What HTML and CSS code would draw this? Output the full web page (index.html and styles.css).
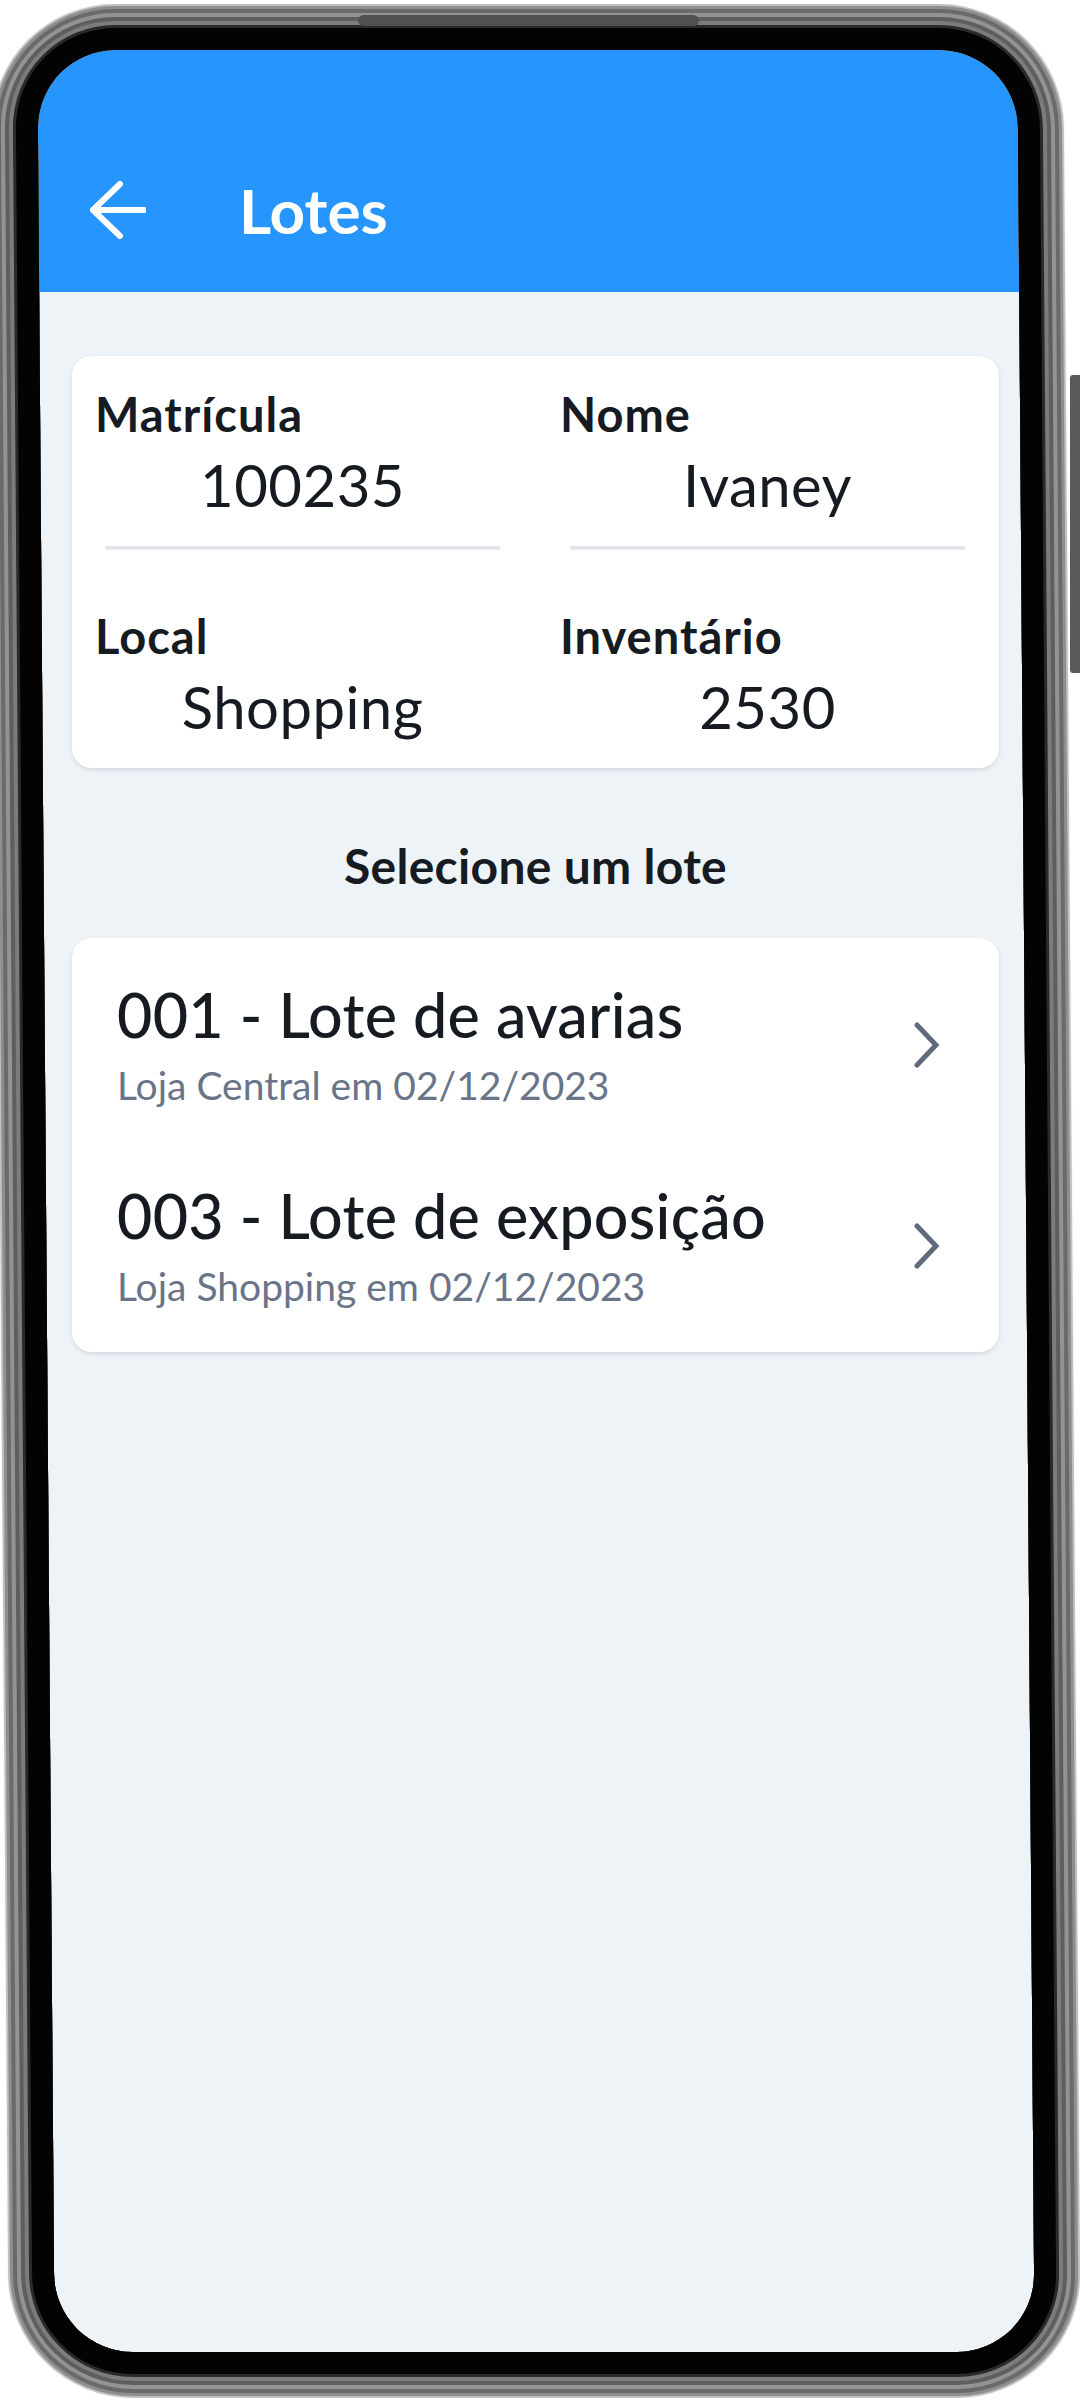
FILE: index.html
```html
<!DOCTYPE html>
<html lang="pt">
<head>
<meta charset="utf-8">
<title>Lotes</title>
<link rel="stylesheet" href="styles.css">
</head>
<body>
<div class="device">
  <div class="screen">
    <header class="appbar">
      <div class="appbar-row">
        <svg class="back" width="56" height="58" viewBox="0 0 56 58" aria-hidden="true">
          <path d="M30 3 L3 29 L30 55 M3 29 L54 29" fill="none" stroke="#fff" stroke-width="6" stroke-linecap="round" stroke-linejoin="round"/>
        </svg>
        <h1 class="title">Lotes</h1>
      </div>
    </header>
    <main class="content">
      <section class="card info">
        <div class="field">
          <div class="label">Matrícula</div>
          <div class="value">100235</div>
          <div class="line"></div>
        </div>
        <div class="field">
          <div class="label">Nome</div>
          <div class="value">Ivaney</div>
          <div class="line"></div>
        </div>
        <div class="field">
          <div class="label">Local</div>
          <div class="value">Shopping</div>
          <div class="line"></div>
        </div>
        <div class="field">
          <div class="label">Inventário</div>
          <div class="value">2530</div>
          <div class="line"></div>
        </div>
      </section>
      <h2 class="section-title">Selecione um lote</h2>
      <section class="card list">
        <div class="item">
          <div class="item-text">
            <div class="item-title">001 - Lote de avarias</div>
            <div class="item-sub">Loja Central em 02/12/2023</div>
          </div>
          <svg class="chev" width="26" height="46" viewBox="0 0 26 46" aria-hidden="true">
            <path d="M3 3 L22 23 L3 43" fill="none" stroke="#5f6b7d" stroke-width="5" stroke-linecap="round" stroke-linejoin="miter"/>
          </svg>
        </div>
        <div class="item">
          <div class="item-text">
            <div class="item-title">003 - Lote de exposição</div>
            <div class="item-sub">Loja Shopping em 02/12/2023</div>
          </div>
          <svg class="chev" width="26" height="46" viewBox="0 0 26 46" aria-hidden="true">
            <path d="M3 3 L22 23 L3 43" fill="none" stroke="#5f6b7d" stroke-width="5" stroke-linecap="round" stroke-linejoin="miter"/>
          </svg>
        </div>
      </section>
    </main>
  </div>
  <div class="bezel"></div>
  <div class="speaker"></div>
  <div class="side-button"></div>
</div>
</body>
</html>
```
FILE: styles.css
```css
* { box-sizing: border-box; }
html, body {
  margin: 0;
  padding: 0;
  background: #fff;
}
body {
  font-family: Lato, "Noto Sans", "Liberation Sans", sans-serif;
  color: #161a21;
}
.device {
  position: relative;
  width: 1080px;
  height: 2400px;
  overflow: hidden;
  background: #fff;
}
.screen {
  margin: 40px 0 0 30px;
  width: 1020px;
  height: 2330px;
  background: #eef3f8;
}
.appbar {
  height: 252px;
  background: #2795fe;
  padding: 120px 0 32px 60px;
}
.appbar-row {
  display: flex;
  align-items: center;
  height: 100px;
}
.back {
  display: block;
  flex: none;
}
.title {
  margin: 0 0 0 93px;
  font-size: 62px;
  line-height: 100px;
  font-weight: 700;
  color: #fff;
}
.content {
  padding: 64px 0 0 42px;
}
.card {
  width: 927px;
  background: #fff;
  border-radius: 20px;
  box-shadow: 0 2px 4px rgba(30, 40, 60, 0.13);
}
.info {
  display: grid;
  grid-template-columns: 465px 1fr;
  row-gap: 59px;
  padding: 30px 24px 0 23px;
  height: 412px;
  overflow: hidden;
}
.field {
  display: flex;
  flex-direction: column;
}
.label {
  font-size: 47px;
  line-height: 56px;
  font-weight: 700;
  letter-spacing: 1px;
}
.value {
  margin: 8px 0 0 10px;
  width: 395px;
  text-align: center;
  font-size: 58px;
  line-height: 70px;
  font-weight: 400;
  letter-spacing: 0.5px;
}
.line {
  margin: 26px 0 0 10px;
  width: 395px;
  height: 3px;
  border-radius: 2px;
  background: #e0e4e9;
  box-shadow: 0 1px 1px rgba(0, 0, 0, 0.08);
}
.section-title {
  margin: 70px 0 44px 0;
  width: 927px;
  text-align: center;
  font-size: 48px;
  line-height: 56px;
  font-weight: 700;
  letter-spacing: 0.3px;
}
.list {
  padding: 6px 0;
}
.item {
  display: flex;
  align-items: center;
  justify-content: space-between;
  padding: 37px 59px 37px 45px;
}
.item-title {
  font-size: 61px;
  line-height: 68px;
  font-weight: 500;
  letter-spacing: 0.3px;
}
.item-sub {
  margin-top: 13px;
  font-size: 39px;
  line-height: 46px;
  color: #6a7488;
}
.chev {
  display: block;
  flex: none;
}
.bezel {
  position: absolute;
  left: 46px;
  top: 50px;
  width: 980px;
  height: 2302px;
  border-radius: 78px;
  transform: skewX(0.43deg);
  box-shadow:
    0 0 0 22px #030303,
    0 0 0 25px #2a2a2a,
    0 0 0 29px #7c7c7c,
    0 0 0 33px #5e5e5e,
    0 0 0 37px #939393,
    0 0 0 41px #6a6a6a,
    0 0 0 44px #8e8e8e,
    0 0 1px 46px #bdbdbd,
    0 0 0 700px #fff;
}
.speaker {
  position: absolute;
  left: 358px;
  top: 15px;
  width: 341px;
  height: 11px;
  border-radius: 6px;
  background: #505050;
}
.side-button {
  position: absolute;
  left: 1070px;
  top: 375px;
  width: 12px;
  height: 298px;
  border-radius: 3px;
  background: #5a5a5a;
}
```
